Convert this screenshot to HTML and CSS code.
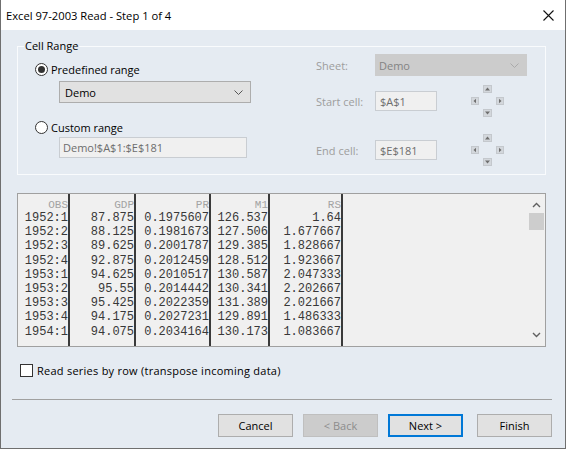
FILE: index.html
```html
<!DOCTYPE html>
<html>
<head>
<meta charset="utf-8">
<title>Excel 97-2003 Read</title>
<link rel="stylesheet" href="styles.css">
</head>
<body>
<div class="window">
  <div class="titlebar">
    <span class="title">Excel 97-2003 Read - Step 1 of 4</span>
    <svg class="close" width="11" height="11" viewBox="0 0 11 11"><path d="M0.5 0.5L10.5 10.5M10.5 0.5L0.5 10.5" stroke="#111" stroke-width="1.1" fill="none"/></svg>
  </div>
  <div class="main">
    <div class="group">
      <div class="group-title">Cell Range</div>
      <div class="group-body">
        <div class="left-col">
          <div class="radio-row first"><span class="radio checked"></span><span>Predefined range</span></div>
          <div class="select main-select"><span>Demo</span><svg class="chev" width="9" height="5" viewBox="0 0 9 5"><path d="M0.5 0.5L4.5 4.5L8.5 0.5" stroke="#555" fill="none"/></svg></div>
          <div class="radio-row second"><span class="radio"></span><span>Custom range</span></div>
          <div class="field wide">Demo!$A$1:$E$181</div>
        </div>
        <div class="right-col">
          <div class="rrow sheet-row"><span class="rlabel">Sheet:</span><div class="select disabled sheet-select"><span>Demo</span><svg class="chev" width="9" height="5" viewBox="0 0 9 5"><path d="M0.5 0.5L4.5 4.5L8.5 0.5" stroke="#aaa" fill="none"/></svg></div></div>
          <div class="rrow cell-row"><span class="rlabel">Start cell:</span><div class="field narrow">$A$1</div>
            <div class="arrows">
              <svg class="a-up" width="9" height="8" viewBox="0 0 9 8"><rect x="0.5" y="0.5" width="8" height="7" fill="#d3d7dc" stroke="#c4c8cd"/><path d="M2 5.5L4.5 2.5L7 5.5Z" fill="#6e6e6e"/></svg>
              <svg class="a-left" width="8" height="8" viewBox="0 0 8 8"><rect x="0.5" y="0.5" width="7" height="7" fill="#d3d7dc" stroke="#c4c8cd"/><path d="M5 1.8L2.5 4L5 6.2Z" fill="#6e6e6e"/></svg>
              <svg class="a-right" width="8" height="8" viewBox="0 0 8 8"><rect x="0.5" y="0.5" width="7" height="7" fill="#d3d7dc" stroke="#c4c8cd"/><path d="M3 1.8L5.5 4L3 6.2Z" fill="#6e6e6e"/></svg>
              <svg class="a-down" width="9" height="8" viewBox="0 0 9 8"><rect x="0.5" y="0.5" width="8" height="7" fill="#d3d7dc" stroke="#c4c8cd"/><path d="M2 2.5L4.5 5.5L7 2.5Z" fill="#6e6e6e"/></svg>
            </div>
          </div>
          <div class="rrow cell-row end-row"><span class="rlabel">End cell:</span><div class="field narrow">$E$181</div>
            <div class="arrows">
              <svg class="a-up" width="9" height="8" viewBox="0 0 9 8"><rect x="0.5" y="0.5" width="8" height="7" fill="#d3d7dc" stroke="#c4c8cd"/><path d="M2 5.5L4.5 2.5L7 5.5Z" fill="#6e6e6e"/></svg>
              <svg class="a-left" width="8" height="8" viewBox="0 0 8 8"><rect x="0.5" y="0.5" width="7" height="7" fill="#d3d7dc" stroke="#c4c8cd"/><path d="M5 1.8L2.5 4L5 6.2Z" fill="#6e6e6e"/></svg>
              <svg class="a-right" width="8" height="8" viewBox="0 0 8 8"><rect x="0.5" y="0.5" width="7" height="7" fill="#d3d7dc" stroke="#c4c8cd"/><path d="M3 1.8L5.5 4L3 6.2Z" fill="#6e6e6e"/></svg>
              <svg class="a-down" width="9" height="8" viewBox="0 0 9 8"><rect x="0.5" y="0.5" width="8" height="7" fill="#d3d7dc" stroke="#c4c8cd"/><path d="M2 2.5L4.5 5.5L7 2.5Z" fill="#6e6e6e"/></svg>
            </div>
          </div>
        </div>
      </div>
    </div>

    <div class="data">
      <div class="col c-obs"><div class="hd">OBS</div><div>1952:1</div><div>1952:2</div><div>1952:3</div><div>1952:4</div><div>1953:1</div><div>1953:2</div><div>1953:3</div><div>1953:4</div><div>1954:1</div></div>
      <div class="col c-gdp"><div class="hd">GDP</div><div>87.875</div><div>88.125</div><div>89.625</div><div>92.875</div><div>94.625</div><div>95.55</div><div>95.425</div><div>94.175</div><div>94.075</div></div>
      <div class="col c-pr"><div class="hd">PR</div><div>0.1975607</div><div>0.1981673</div><div>0.2001787</div><div>0.2012459</div><div>0.2010517</div><div>0.2014442</div><div>0.2022359</div><div>0.2027231</div><div>0.2034164</div></div>
      <div class="col c-m1"><div class="hd">M1</div><div>126.537</div><div>127.506</div><div>129.385</div><div>128.512</div><div>130.587</div><div>130.341</div><div>131.389</div><div>129.891</div><div>130.173</div></div>
      <div class="col c-rs"><div class="hd">RS</div><div>1.64</div><div>1.677667</div><div>1.828667</div><div>1.923667</div><div>2.047333</div><div>2.202667</div><div>2.021667</div><div>1.486333</div><div>1.083667</div></div>
      <div class="scrollbar">
        <div class="sb-btn"><svg width="9" height="6" viewBox="0 0 9 6"><path d="M1 5L4.5 1.5L8 5" stroke="#606060" stroke-width="1.4" fill="none"/></svg></div>
        <div class="sb-thumb"></div>
        <div class="sb-track"></div>
        <div class="sb-btn"><svg width="9" height="6" viewBox="0 0 9 6"><path d="M1 1L4.5 4.5L8 1" stroke="#606060" stroke-width="1.4" fill="none"/></svg></div>
      </div>
    </div>

    <div class="check-row"><span class="checkbox"></span><span class="check-label">Read series by row (transpose incoming data)</span></div>
  </div>

  <div class="separator"></div>

  <div class="buttons">
    <div class="btn">Cancel</div>
    <div class="btn disabled">&lt; Back</div>
    <div class="btn default">Next &gt;</div>
    <div class="btn finish">Finish</div>
  </div>
</div>
</body>
</html>
```

FILE: styles.css
```css
html, body {
  margin: 0;
  padding: 0;
  background: #ffffff;
}

body {
  font-family: "Open Sans", "Noto Sans", sans-serif;
  font-size: 11px;
  color: #000;
}

.window {
  width: 566px;
  height: 449px;
  box-sizing: border-box;
  border: 1px solid #6f6f6f;
  border-top: none;
  background: #e5ebf2;
  display: flex;
  flex-direction: column;
}

.titlebar {
  height: 30px;
  flex: none;
  background: #ffffff;
  display: flex;
  align-items: center;
  justify-content: space-between;
  padding: 0 11px 0 5px;
  font-size: 11.2px;
}

.close {
  display: block;
}

.main {
  display: flex;
  flex-direction: column;
  padding: 16px 19px 0 16px;
}

/* Group box */
.group {
  border: 1px solid #f9fbfd;
}

.group-title {
  width: max-content;
  margin: -9px 0 0 6px;
  padding: 0 1px;
  line-height: 16px;
  background: #e5ebf2;
}

.group-body {
  display: flex;
  justify-content: space-between;
  align-items: flex-start;
  padding: 0 18px 7px 17px;
}

.left-col {
  display: flex;
  flex-direction: column;
}

.radio-row {
  display: flex;
  align-items: center;
  gap: 3px;
  height: 16px;
}

.radio-row.first {
  margin-top: 7px;
}

.radio-row.second {
  margin-top: 16px;
}

.radio {
  width: 13px;
  height: 13px;
  box-sizing: border-box;
  border: 1px solid #333;
  border-radius: 50%;
  background: #ffffff;
  display: flex;
  align-items: center;
  justify-content: center;
}

.radio.checked::after {
  content: "";
  width: 7px;
  height: 7px;
  border-radius: 50%;
  background: #333;
}

.select {
  box-sizing: border-box;
  height: 22px;
  display: flex;
  align-items: center;
  justify-content: space-between;
  border: 1px solid #adadad;
  background: #e1e1e1;
  padding: 0 7px 0 5px;
}

.chev {
  display: block;
}

.main-select {
  width: 192px;
  margin: 4px 0 0 24px;
}

.select.disabled {
  background: #cccccc;
  border-color: #cccccc;
  color: #838383;
  padding-left: 3px;
}

.sheet-select {
  width: 152px;
}

.field {
  box-sizing: border-box;
  height: 21px;
  display: flex;
  align-items: center;
  border: 1px solid #c9cdd2;
  background: #f0f0f0;
  color: #6d6d6d;
  padding-left: 3px;
}

.field.wide {
  width: 188px;
  margin: 2px 0 0 24px;
}

.field.narrow {
  width: 62px;
  height: 20px;
  padding-left: 4px;
}

.right-col {
  display: flex;
  flex-direction: column;
  width: 211px;
}

.rrow {
  display: flex;
  align-items: center;
}

.rlabel {
  width: 59px;
  color: #9d9d9d;
}

.sheet-row {
  height: 22px;
}

.cell-row {
  height: 34px;
  margin-top: 8px;
}

.cell-row.end-row {
  margin-top: 15px;
}

.arrows {
  margin-left: 34px;
  display: grid;
  grid-template-columns: 8px 9px 8px;
  grid-template-rows: 8px 8px 8px;
  column-gap: 4px;
  row-gap: 4px;
}

.arrows svg {
  display: block;
}

.a-up { grid-column: 2; grid-row: 1; }
.a-left { grid-column: 1; grid-row: 2; }
.a-right { grid-column: 3; grid-row: 2; }
.a-down { grid-column: 2; grid-row: 3; }

/* Data preview */
.data {
  margin-top: 18px;
  height: 154px;
  box-sizing: border-box;
  border: 1px solid #a0a0a0;
  background: #f0f0f0;
  display: flex;
  font-family: "Liberation Mono", "Courier New", monospace;
  font-size: 12px;
  color: #383838;
}

.col {
  box-sizing: border-box;
  border-right: 2px solid #3a3a3a;
  text-align: right;
  padding-top: 5px;
  line-height: 14.2px;
  white-space: nowrap;
}

.col .hd {
  color: #a3a3a3;
  font-size: 11px;
  line-height: 12px;
}

.c-obs { width: 52px; }
.c-gdp { width: 66px; }
.c-pr { width: 75px; }
.c-m1 { width: 59px; }
.c-rs { width: 73px; }

.scrollbar {
  margin-left: auto;
  width: 17px;
  background: #f0f0f0;
  display: flex;
  flex-direction: column;
  padding: 2px 0 3px;
}

.sb-btn {
  height: 17px;
  display: flex;
  align-items: center;
  justify-content: center;
}

.sb-btn svg {
  display: block;
}

.sb-thumb {
  height: 17px;
  margin: 0 1px;
  background: #cdcdcd;
}

.sb-track {
  flex: 1;
}

/* Checkbox row */
.check-row {
  margin: 17px 0 0 3px;
  display: flex;
  align-items: center;
  gap: 4px;
  height: 13px;
}

.check-label {
  letter-spacing: 0.25px;
}

.checkbox {
  width: 13px;
  height: 13px;
  box-sizing: border-box;
  border: 1px solid #333;
  background: #ffffff;
}

.separator {
  margin: 22px 13px 0 11px;
  border-top: 1px solid #a0a0a0;
}

/* Buttons */
.buttons {
  margin-top: 14px;
  padding-right: 13px;
  display: flex;
  justify-content: flex-end;
  gap: 10px;
}

.btn {
  width: 75px;
  height: 23px;
  box-sizing: border-box;
  border: 1px solid #adadad;
  background: #e1e1e1;
  display: flex;
  align-items: center;
  justify-content: center;
}

.btn.disabled {
  background: #cccccc;
  border-color: #bfbfbf;
  color: #8c8c8c;
}

.btn.default {
  border: 2px solid #0078d7;
}

.btn.finish {
  margin-left: 4px;
}
```
